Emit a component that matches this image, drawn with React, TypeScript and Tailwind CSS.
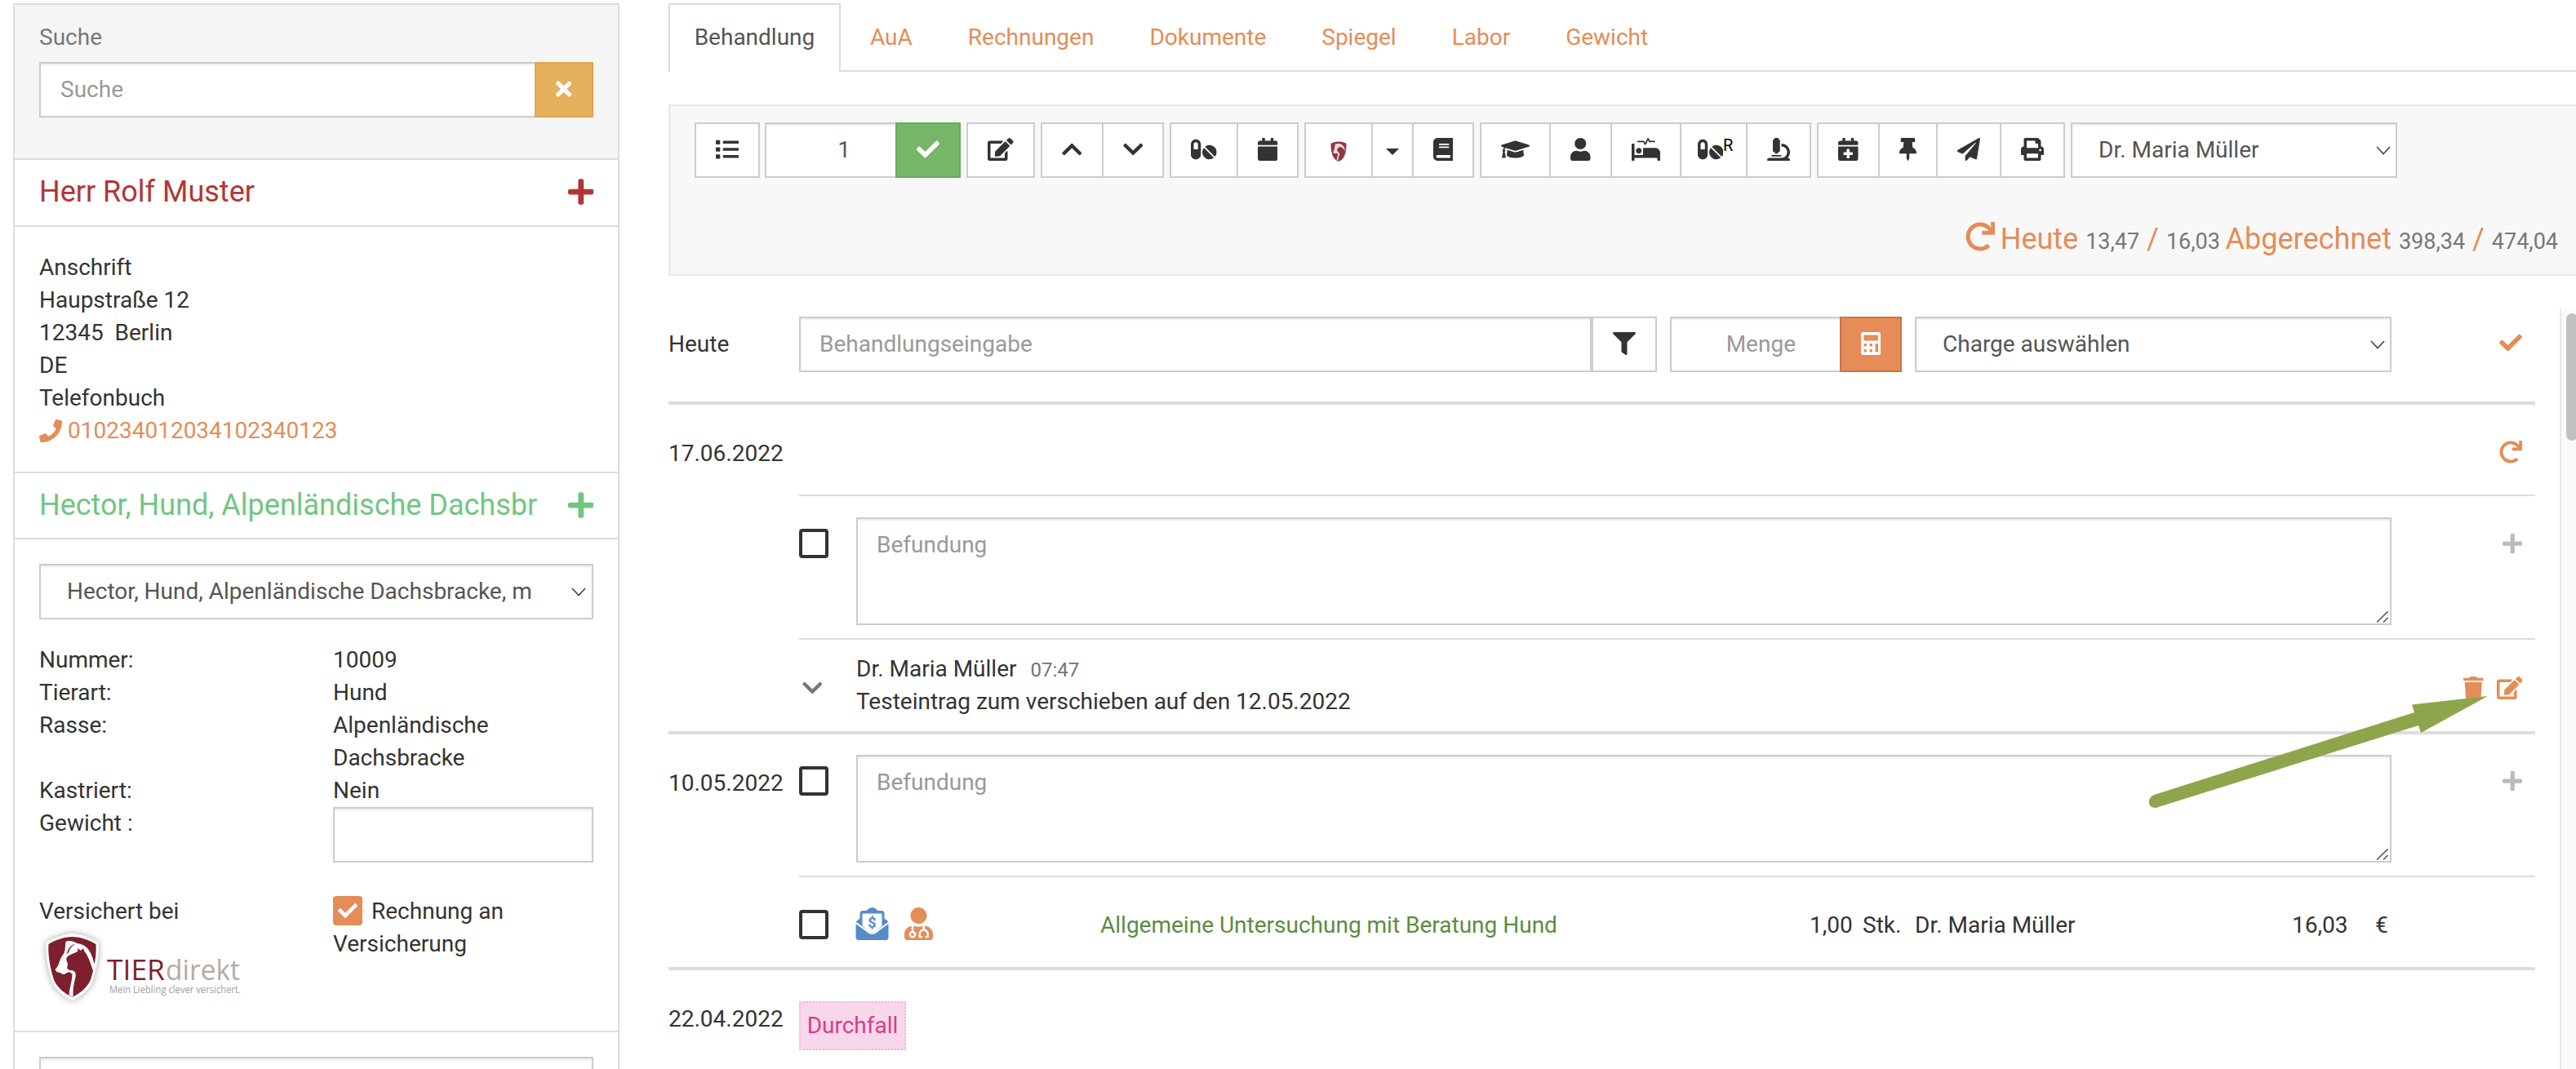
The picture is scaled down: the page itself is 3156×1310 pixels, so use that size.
import React, { type ReactNode } from "react";
import {
  FaBook,
  FaCalculator,
  FaCalendar,
  FaCalendarPlus,
  FaCheck,
  FaChevronDown,
  FaChevronUp,
  FaEdit,
  FaFilter,
  FaGraduationCap,
  FaList,
  FaMicroscope,
  FaPaperPlane,
  FaPhone,
  FaPills,
  FaPlus,
  FaPrint,
  FaProcedures,
  FaRedo,
  FaThumbtack,
  FaTimes,
  FaTrash,
  FaUser,
  FaUserMd,
} from "react-icons/fa";

/* Icon boxes: 28px tall, width by the glyph's own proportions */
const I352 = "block h-[28px] w-[19.25px] shrink-0";
const I384 = "block h-[28px] w-[21px] shrink-0";
const I448 = "block h-[28px] w-[24.5px] shrink-0";
const I512 = "block h-[28px] w-[28px] shrink-0";
const I576 = "block h-[28px] w-[31.5px] shrink-0";
const I640 = "block h-[28px] w-[35px] shrink-0";
const FIELD =
  "border-2 border-[#ccc] bg-white shadow-[inset_0_2px_2px_rgba(0,0,0,0.075)]";

/* Shield emblem with dog and cat silhouettes */
function Shield() {
  return (
    <g>
      <path d="M33 1 C22 2 10 6 1 12 C0 26 3 42 7 56 C10 69 22 78 33 83 C44 78 56 69 59 56 C63 42 66 26 65 12 C56 6 44 2 33 1Z" fill="#fff" />
      <path d="M33 5 C23 5 12 9 4 14 C3 27 6 43 10 56 C13 66 23 74 33 79 C43 74 53 66 56 56 C60 43 63 27 62 14 C54 9 43 5 33 5Z" fill="#7d1f2c" />
      <path d="M25 11 C28 9 34 10 39 13 C50 14 55 22 58 31 C59 35 60 38 61 39 L60 50 C56 41 54 30 48 23 L46.500 19 L43.500 22 L40 19 L39.500 23 C34 26 28 27 26 31 C25 36 29 37 27 41 C26 44 28 46 32 46 C38 47 38 51 36.500 57 C34.500 64 34 69 34 79 L29 76.500 C30 66 33 58 33 51 C30 47 28 48 25 50 C22 52 20 50 18 49 L14 48 L12 45 C17 41 17 33 21 28 C25 24 24 17 25 11Z" fill="#fff" />
      <path d="M26 26 C28 20 31 15 37 13.500 C33 16 30 19 29 23 C28 25 27 26 26 26Z" fill="#7d1f2c" />
    </g>
  );
}

function ShieldSmall() {
  return (
    <svg viewBox="0 0 20 25" className="block h-[25px] w-[20px]">
      <path d="M10 0.500 C6 0.500 2.500 1.500 0.500 3 C0.500 11 1.500 16 4 20 C6 23 8 24 10 25 C12 24 14 23 16 20 C18.500 16 19.500 11 19.500 3 C17.500 1.500 14 0.500 10 0.500Z" fill="#8f3641" />
      <path d="M6 3.500 C11 2 17 3 18 12 C14 7 12 6 10 8 C7 10 8 12 10.500 14 C12 17 9.500 19 9.500 24 L7.500 22.500 C9 18 9.500 16 8 14.500 C6 15.500 5 15 3 14 C5 11 5 7 6 3.500Z" fill="#efd9dc" />
    </svg>
  );
}

function TierdirektLogo() {
  return (
    <svg viewBox="0 0 270 110" className="block h-[110px] w-[270px]">
      <g transform="translate(15.500 13)" className="drop-shadow-[0_0_4px_rgba(0,0,0,0.35)]">
        <Shield />
      </g>
      <text x="91" y="71" fontSize="35.500" fontFamily="'Open Sans', sans-serif" fill="#7d1f2c" textLength="71" lengthAdjust="spacingAndGlyphs">
        TIER
      </text>
      <text x="163" y="71" fontSize="34" fontFamily="'Open Sans', sans-serif" fill="#b3aba5" textLength="91" lengthAdjust="spacingAndGlyphs">
        direkt
      </text>
      <text x="94" y="87" fontSize="12.500" fontFamily="'Open Sans', sans-serif" fill="#a39c97" textLength="161" lengthAdjust="spacingAndGlyphs">
        Mein Liebling clever versichert.
      </text>
    </svg>
  );
}

function EnvelopeDollar() {
  return (
    <svg viewBox="0 0 40 40" className="block h-[40px] w-[41px]">
      <path d="M0 17.500 L5 13.500 V7.500 Q5 4 8.500 4 H13 L16 1.500 Q20 -1.500 24 1.500 L27 4 H31.500 Q35 4 35 7.500 V13.500 L40 17.500 L20 32Z" fill="#568bc8" />
      <path d="M8 7.500 H32 V22.500 L24 29.500 Q20 33 16 29.500 L8 22.500Z" fill="#fff" />
      <path d="M0 20 L15.500 31.500 Q20 34.500 24.500 31.500 L40 20 V36.500 Q40 40 36.500 40 H3.500 Q0 40 0 36.500Z" fill="#568bc8" />
      <text x="20" y="25" textAnchor="middle" fontFamily="Roboto, sans-serif" fontWeight="700" fontSize="18" fill="#568bc8">
        $
      </text>
    </svg>
  );
}

function SelectArrow() {
  return (
    <svg viewBox="0 0 18 11" className="block h-[11px] w-[18px] shrink-0">
      <path d="M1 1 L9 9.500 L17 1" fill="none" stroke="#444" strokeWidth="1.600" />
    </svg>
  );
}

function Btn({ width, children }: { width: string; children: ReactNode }) {
  return (
    <div className={`-ml-[2px] flex h-[68px] items-center justify-center border-2 border-[#ccc] bg-white pb-[2px] text-[#333] first:ml-0 ${width}`}>
      {children}
    </div>
  );
}

function Checkbox() {
  return <div className="h-[36px] w-[36px] shrink-0 rounded-[4px] border-4 border-[#333]" />;
}

function Grip() {
  return (
    <svg viewBox="0 0 16 14" className="block h-[14px] w-[16px]">
      <path d="M1 13.500 L14.500 0.500 M9 13.500 L14.500 8" fill="none" stroke="#555" strokeWidth="1.600" />
    </svg>
  );
}

function Befundung() {
  return (
    <div className={`flex h-[132px] w-[1881px] justify-between ${FIELD}`}>
      <span className="pt-[12px] pl-[23px] text-[#999]">Befundung</span>
      <span className="self-end pr-[1px] pb-[1px]">
        <Grip />
      </span>
    </div>
  );
}

function DateCell({ children, className = "" }: { children?: ReactNode; className?: string }) {
  return <div className={`w-[160px] shrink-0 ${className}`}>{children}</div>;
}

function Sidebar() {
  const facts: [string, string][] = [
    ["Nummer:", "10009"],
    ["Tierart:", "Hund"],
    ["Rasse:", "Alpenländische Dachsbracke"],
    ["Kastriert:", "Nein"],
  ];
  return (
    <aside className="mt-[4px] ml-[16px] flex h-[1320px] w-[743px] shrink-0 flex-col border-2 border-[#ddd]">
      <div className="h-[190px] shrink-0 border-b-2 border-[#ddd] bg-[#f5f5f5] px-[30px] pt-[20px] text-[#777]">
        <div>Suche</div>
        <div className="mt-[10px] flex">
          <div className={`flex h-[68px] w-[609px] items-center px-[24px] text-[#999] ${FIELD}`}>Suche</div>
          <div className="-ml-[2px] flex h-[68px] w-[72px] items-center justify-center border-2 border-[#e2a64c] bg-[#e7b05f] pb-[3px] text-white">
            <FaTimes className={I352} />
          </div>
        </div>
      </div>
      <div className="flex h-[82px] shrink-0 items-center justify-between border-b-2 border-[#ddd] px-[30px] pb-[2px] text-[36px] text-[#b23535]">
        <span>Herr Rolf Muster</span>
        <FaPlus className="h-[36px] w-[31.5px] shrink-0" />
      </div>
      <div className="h-[302px] shrink-0 border-b-2 border-[#ddd] px-[30px] pt-[30px]">
        <div>Anschrift</div>
        <div>Haupstraße 12</div>
        <div>12345&nbsp; Berlin</div>
        <div>DE</div>
        <div>Telefonbuch</div>
        <div className="flex items-center gap-[7px] text-[#e58c57]">
          <FaPhone className={I512} />
          <span>010234012034102340123</span>
        </div>
      </div>
      <div className="flex h-[81px] shrink-0 items-center justify-between border-b-2 border-[#ddd] px-[30px] pb-[2px] text-[36px] whitespace-nowrap text-[#71c680]">
        <span>Hector, Hund, Alpenländische Dachsbr</span>
        <FaPlus className="h-[36px] w-[31.5px] shrink-0" />
      </div>
      <div className="h-[604px] shrink-0 border-b-2 border-[#ddd] px-[30px] pt-[30px]">
        <div className={`flex h-[68px] items-center justify-between pr-[7px] pl-[32px] text-[#555] ${FIELD}`}>
          <span>Hector, Hund, Alpenländische Dachsbracke, m</span>
          <SelectArrow />
        </div>
        <div className="mt-[30px] grid grid-cols-[360px_319px]">
          {facts.map(([k, v]) => (
            <React.Fragment key={k}>
              <div>{k}</div>
              <div className="w-[260px]">{v}</div>
            </React.Fragment>
          ))}
          <div>Gewicht :</div>
          <div className={`h-[68px] ${FIELD}`} />
          <div className="mt-[40px]">
            Versichert bei
            <div className="-mt-[7px] -ml-[8px] h-[100px]">
              <TierdirektLogo />
            </div>
          </div>
          <div className="mt-[40px]">
            <div className="flex items-center gap-[11px]">
              <span className="-mt-[2px] flex h-[36px] w-[36px] items-center justify-center rounded-[4px] bg-[#e58c57] text-white">
                <FaCheck className="h-[24px] w-[24px]" />
              </span>
              Rechnung an
            </div>
            Versicherung
          </div>
        </div>
      </div>
      <div className="px-[30px] pt-[30px]">
        <div className={`h-[68px] ${FIELD}`} />
      </div>
    </aside>
  );
}

function Tabs() {
  const tabs: [string, string][] = [
    ["AuA", "ml-[36px]"],
    ["Rechnungen", "ml-[68px]"],
    ["Dokumente", "ml-[68px]"],
    ["Spiegel", "ml-[68px]"],
    ["Labor", "ml-[68px]"],
    ["Gewicht", "ml-[68px]"],
  ];
  return (
    <div className="mt-[4px] flex h-[84px] text-[#e58c57]">
      <div className="w-[211px] shrink-0 border-2 border-b-0 border-[#ddd] pt-[20px] text-center text-[#555]">Behandlung</div>
      <div className="flex grow border-b-2 border-[#ddd] pt-[22px]">
        {tabs.map(([t, m]) => (
          <span key={t} className={m}>
            {t}
          </span>
        ))}
      </div>
    </div>
  );
}

function Toolbar() {
  return (
    <div className="mt-[40px] flex h-[210px] flex-col border-2 border-r-0 border-[#e7e7e7] bg-[#f8f8f8] pt-[20px] pl-[30px]">
      <div className="flex gap-[7px]">
        <div className="-mr-[1px] flex">
          <Btn width="w-[80px]"><FaList className={I512} /></Btn>
        </div>
        <div className="flex">
          <div className={`flex h-[68px] w-[162px] items-center justify-end pr-[55px] text-[#555] ${FIELD}`}>1</div>
          <div className="-ml-[2px] flex h-[68px] w-[80px] items-center justify-center border-2 border-[#65ae58] bg-[#75b668] pb-[3px] text-white">
            <FaCheck className={I512} />
          </div>
        </div>
        <div className="flex">
          <Btn width="w-[84px]"><FaEdit className={I576} /></Btn>
        </div>
        <div className="flex">
          <Btn width="w-[77px]"><FaChevronUp className={I448} /></Btn>
          <Btn width="w-[76px]"><FaChevronDown className={I448} /></Btn>
        </div>
        <div className="flex">
          <Btn width="w-[84px]"><FaPills className={I576} /></Btn>
          <Btn width="w-[76px]"><FaCalendar className={I448} /></Btn>
        </div>
        <div className="flex">
          <Btn width="w-[84px]"><span className="pt-[4px]"><ShieldSmall /></span></Btn>
          <Btn width="w-[52px]">
            <svg viewBox="0 0 16 8" className="mt-[6px] block h-[8px] w-[16px]"><path d="M0 0H16L8 8Z" fill="#333" /></svg>
          </Btn>
          <Btn width="w-[76px]"><FaBook className={I448} /></Btn>
        </div>
        <div className="flex">
          <Btn width="w-[87px]"><FaGraduationCap className={I640} /></Btn>
          <Btn width="w-[77px]"><FaUser className={I448} /></Btn>
          <Btn width="w-[87px]"><FaProcedures className={I640} /></Btn>
          <Btn width="w-[83px]">
            <FaPills className={`${I576} ml-[4px]`} />
            <span className="-mt-[10px] text-[20px] text-black">R</span>
          </Btn>
          <Btn width="w-[80px]"><FaMicroscope className={I512} /></Btn>
        </div>
        <div className="flex">
          <Btn width="w-[77px]"><FaCalendarPlus className={I448} /></Btn>
          <Btn width="w-[73px]"><FaThumbtack className={I384} /></Btn>
          <Btn width="w-[80px]"><FaPaperPlane className={I512} /></Btn>
          <Btn width="w-[80px]"><FaPrint className={I512} /></Btn>
        </div>
        <div className={`flex h-[68px] w-[400px] items-center justify-between pr-[6px] pl-[32px] text-[#555] ${FIELD}`}>
          <span>Dr. Maria Müller</span>
          <SelectArrow />
        </div>
      </div>
      <div className="mt-[51px] flex items-baseline justify-end pr-[22px] text-[36px] text-[#e58c57]">
        <FaRedo className="mr-[7px] h-[36px] w-[36px] translate-y-[3px]" />
        <span className="whitespace-pre">
          Heute <span className="text-[27px] text-[#777]">13,47</span>
          {" / "}
          <span className="text-[27px] text-[#777]">16,03 </span>
          Abgerechnet <span className="text-[27px] text-[#777]">398,34</span>
          {" / "}
          <span className="text-[27px] text-[#777]">474,04</span>
        </span>
      </div>
    </div>
  );
}

function Treatments() {
  return (
    <div className="w-[2287px]">
      {/* new entry */}
      <div className="flex h-[118px] border-b-4 border-[#ddd] pt-[10px]">
        <DateCell className="pt-[14px]">Heute</DateCell>
        <div className={`flex h-[68px] w-[971px] items-center pl-[23px] text-[#999] ${FIELD}`}>Behandlungseingabe</div>
        <div className="flex">
          <Btn width="w-[80px]"><FaFilter className={I512} /></Btn>
        </div>
        <div className={`ml-[16px] flex h-[68px] w-[210px] items-center justify-end pr-[54px] text-[#999] ${FIELD}`}>Menge</div>
        <div className="-ml-[2px] flex h-[68px] w-[76px] items-center justify-center border-2 border-[#ca7446] bg-[#e58c57] pb-[3px] text-white">
          <FaCalculator className={I448} />
        </div>
        <div className={`ml-[16px] flex h-[68px] w-[584px] items-center justify-between pr-[6px] pl-[32px] text-[#555] ${FIELD}`}>
          <span>Charge auswählen</span>
          <SelectArrow />
        </div>
        <FaCheck className={`${I512} mt-[18px] mr-[16px] ml-auto text-[#e58c57]`} />
      </div>

      {/* 17.06.2022 */}
      <div className="flex h-[404px] border-b-4 border-[#ddd]">
        <DateCell className="pt-[40px]">17.06.2022</DateCell>
        <div className="grow">
          <div className="flex h-[112px] items-center justify-end border-b-2 border-[#ddd] pt-[6px] pr-[16px]">
            <FaRedo className={`${I512} text-[#e58c57]`} />
          </div>
          <div className="flex h-[176px] border-b-2 border-[#ddd] pt-[26px]">
            <div className="w-[70px] pt-[14px]"><Checkbox /></div>
            <Befundung />
            <FaPlus className={`${I448} mt-[18px] mr-[16px] ml-auto text-[#bbb]`} />
          </div>
          <div className="flex">
            <div className="w-[70px] pt-[45px] pl-[4px] text-[#777]"><FaChevronDown className={I448} /></div>
            <div className="pt-[16px]">
              <div>Dr. Maria Müller <span className="ml-[10px] text-[24px] text-[#6c757d]">07:47</span></div>
              <div className="-mt-[1px]">Testeintrag zum verschieben auf den 12.05.2022</div>
            </div>
            <div className="mr-[16px] ml-auto flex gap-[16px] pt-[45px] text-[#e58c57]">
              <FaTrash className={I448} />
              <FaEdit className={I576} />
            </div>
          </div>
        </div>
      </div>

      {/* 10.05.2022 */}
      <div className="flex h-[289px] border-b-4 border-[#ddd]">
        <DateCell className="pt-[40px]">10.05.2022</DateCell>
        <div className="grow">
          <div className="flex h-[175px] border-b-2 border-[#ddd] pt-[25px]">
            <div className="w-[70px] pt-[14px]"><Checkbox /></div>
            <Befundung />
            <FaPlus className={`${I448} mt-[18px] mr-[16px] ml-auto text-[#bbb]`} />
          </div>
          <div className="flex h-[110px] items-center pt-[8px]">
            <div className="-mt-[2px] w-[69px]"><Checkbox /></div>
            <div className="-mt-[4px] flex w-[300px] gap-[19px]">
              <EnvelopeDollar />
              <FaUserMd className="h-[40px] w-[35px] text-[#e58c57]" />
            </div>
            <div className="w-[869px] text-[#5b8c42]">Allgemeine Untersuchung mit Beratung Hund</div>
            <div className="w-[65px]">1,00</div>
            <div className="w-[64px]">Stk.</div>
            <div className="w-[462px]">Dr. Maria Müller</div>
            <div className="w-[102px]">16,03</div>
            <div>€</div>
          </div>
        </div>
      </div>

      {/* 22.04.2022 */}
      <div className="flex">
        <DateCell className="pt-[40px]">22.04.2022</DateCell>
        <div className="mt-[38px] flex h-[60px] w-[131px] items-center justify-center border-2 border-dotted border-[#f2b5de] bg-[#f8d7eb] pb-[1px] text-[#dd3a8c]">
          Durchfall
        </div>
      </div>
    </div>
  );
}

export default function App() {
  return (
    <div className="relative flex h-[1310px] w-[3156px] overflow-hidden bg-white font-['Roboto',sans-serif] text-[28px] leading-[40px] text-[#333]">
      <Sidebar />
      <main className="ml-[60px] w-[2337px] shrink-0">
        <Tabs />
        <Toolbar />
        <div className="mt-[40px] flex justify-between">
          <Treatments />
          <div className="h-[932px] w-[20px] border-l-2 border-[#e8e8e8] bg-[#fafafa] pt-[6px] pl-[6px]">
            <div className="h-[156px] w-[14px] rounded-[8px] bg-[#c1c1c1]" />
          </div>
        </div>
      </main>
      {/* pointer over the edit actions */}
      <svg viewBox="0 0 420 145" className="absolute top-[850px] left-[2630px] h-[145px] w-[420px]">
        <path d="M418 3 L325 13.500 L328 23 L9 124 C1 127 0 140 11 140 L333 39 L336 48Z" fill="#8fa54b" />
      </svg>
    </div>
  );
}
